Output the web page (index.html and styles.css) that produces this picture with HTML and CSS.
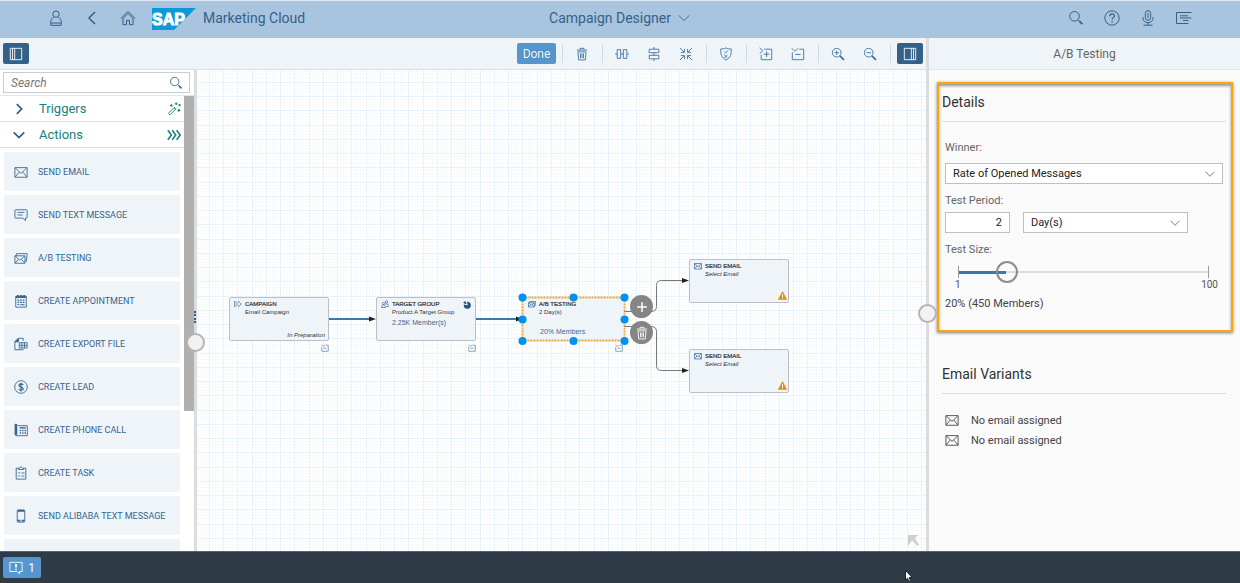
FILE: index.html
```html
<!DOCTYPE html>
<html lang="en">
<head>
    <meta charset="UTF-8">
    <meta name="viewport" content="width=device-width, initial-scale=1.0">
    <title>Campaign Designer</title>
    <link rel="stylesheet" href="styles.css">
</head>
<body>
    <!-- icon set -->
    <svg class="icon-defs" aria-hidden="true">
        <symbol id="i-user" viewBox="0 0 16 16"><circle cx="8" cy="4.2" r="3.2"/><path d="M5.5 7.5C3.5 8.3 2.7 10 2.7 12.5v2.8h10.6v-2.8c0-2.5-.8-4.2-2.8-5M2.7 13h10.6"/></symbol>
        <symbol id="i-back" viewBox="0 0 16 16"><path d="M11 2L5 8l6 6" stroke-width="1.5"/></symbol>
        <symbol id="i-home" viewBox="0 0 16 16"><path d="M.8 8.3L8 1.5l7.2 6.8M2.2 9L8 3.6 13.8 9M3 8.5v6.2h3.5v-4.4h3v4.4H13V8.5"/></symbol>
        <symbol id="i-search" viewBox="0 0 16 16"><circle cx="6.5" cy="6.3" r="4.8"/><path d="M10 10l2 1.8" /><path d="M11.3 11.2l3 3" stroke-width="1.8"/></symbol>
        <symbol id="i-help" viewBox="0 0 16 16"><circle cx="8" cy="8" r="7.2"/><path d="M5.8 6.2c0-3 4.6-3 4.6-.3 0 1.7-2.3 1.8-2.3 3.8M8.1 11v1.5" stroke-width="1.2"/></symbol>
        <symbol id="i-mic" viewBox="0 0 16 16"><rect x="5.3" y=".7" width="5.4" height="9.6" rx="2.7"/><path d="M3 7v1.5c0 5.5 10 5.5 10 0V7M8 12.7V15M3.5 15.2h9M8 3v5"/></symbol>
        <symbol id="i-menu" viewBox="0 0 16 16"><path d="M15.5 2.5h-15v11h12M4 5.8h8M4 8h11.5M7 10.5h5.5"/></symbol>
        <symbol id="i-down" viewBox="0 0 16 16"><path d="M2 5l6 6 6-6"/></symbol>
        <symbol id="i-right" viewBox="0 0 16 16"><path d="M5.5 2.5L11 8l-5.5 5.5"/></symbol>
        <symbol id="i-panel-left" viewBox="0 0 16 16"><path d="M1.5 1.5h13v13h-13zM4 1.5v13M6.5 1.5v13"/></symbol>
        <symbol id="i-panel-right" viewBox="0 0 16 16"><path d="M1.5 1.5h13v13h-13zM9.5 1.5v13M12 1.5v13"/></symbol>
        <symbol id="i-trash" viewBox="0 0 16 16"><path d="M2 3.5h12M5.8 3.2V1.5h4.4v1.7M3.2 5.5h9.6M3.4 5.5l.8 9.3h7.6l.8-9.3M6.3 7.3v5.5M8 7.3v5.5M9.7 7.3v5.5"/></symbol>
        <symbol id="i-align-h" viewBox="0 0 16 16"><path d="M2.5 3h4v10h-4zM9.5 3h4v10h-4zM0 8h2.5M6.5 8h3M13.5 8H16"/></symbol>
        <symbol id="i-align-v" viewBox="0 0 16 16"><path d="M2.5 2.5h11v4h-11zM2.5 9.5h11v4h-11zM8 0v2.5M8 6.5v3M8 13.5V16"/></symbol>
        <symbol id="i-collapse" viewBox="0 0 16 16"><path d="M1 1l4.8 4.8M6.2 2.2v4h-4M15 1l-4.8 4.8M9.8 2.2v4h4M1 15l4.8-4.8M6.2 13.8v-4h-4M15 15l-4.8-4.8M9.8 13.8v-4h4"/></symbol>
        <symbol id="i-shield" viewBox="0 0 16 16"><path d="M8 1c2 1.2 4 1.3 6 1.2.3 6-.8 10-6 12.8C2.8 12.2 1.7 8.2 2 2.2 4 2.3 6 2.2 8 1zM5.8 5.2l1.7 1.7 2.8-3M6 9l3.6 3.4M9.6 9L6 12.4"/></symbol>
        <symbol id="i-expand-box" viewBox="0 0 16 16"><path d="M6 2.5h8.5v12h-12V9M.8 1l3.5 3.3L.8 7.6M8.7 5v6.5M5.4 8.2H12"/></symbol>
        <symbol id="i-collapse-box" viewBox="0 0 16 16"><path d="M9.5 2.5h5v12h-13V6M1 1.5L4.5 5 8 1.5M5 8.5h6"/></symbol>
        <symbol id="i-zoom-in" viewBox="0 0 16 16"><circle cx="6.5" cy="6.5" r="5"/><path d="M6.5 4v5M4 6.5h5"/><path d="M10.2 10.2l4.6 4.4" stroke-width="2"/></symbol>
        <symbol id="i-zoom-out" viewBox="0 0 16 16"><circle cx="6.5" cy="6.5" r="5"/><path d="M4 6.5h5"/><path d="M10.2 10.2l4.6 4.4" stroke-width="2"/></symbol>
        <symbol id="i-wand" viewBox="0 0 16 16"><path d="M1.5 13l7-7 1.8 1.8-7 7zM8 6.8l1.5 1.5"/><path d="M3.5 4h3M5 2.5v3M9 2h3M10.5.5v3M13 3.5h2.6M14.3 2.2v2.6M12 9.5h3M13.5 8v3" stroke-width="1.4"/></symbol>
        <symbol id="i-triple" viewBox="0 0 16 16"><path d="M1 2.5L5 8l-4 5.5M6 2.5L10 8l-4 5.5M11 2.5L15 8l-4 5.5" stroke-width="1.8"/></symbol>
        <symbol id="i-mail" viewBox="0 0 16 16"><path d="M1 3h14v11H1zM1.5 3.5L8 9.5l6.5-6M1.5 13.5l4.3-5.3M14.5 13.5l-4.3-5.3"/></symbol>
        <symbol id="i-message" viewBox="0 0 16 16"><path d="M2 2h12q1 0 1 1v7.5q0 1-1 1h-1v3l-2.8-3H2q-1 0-1-1V3q0-1 1-1zM4 5h8M4 8h6"/></symbol>
        <symbol id="i-mails" viewBox="0 0 16 16"><path d="M1 5.5h11.5V14H1zM1.5 6l5.2 4.5L12 6M1.5 13.5l3.5-4M12 13.5L8.500 9.5M2.3 5.5L3 3h12l-.8 8.5h-1.7"/></symbol>
        <symbol id="i-calendar" viewBox="0 0 16 16"><path d="M2 2.5h12v12.5H2z"/><path d="M2 3.5h12M4.5 1v3M8 1v3M11.5 1v3" stroke-width="2"/><path d="M4 7h2M7 7h2M10 7h2M4 9.5h2M7 9.5h2M10 9.5h2M4 12h2M7 12.3h5" stroke-width="1.3"/></symbol>
        <symbol id="i-export" viewBox="0 0 16 16"><path d="M6 14.5H1v-9l4-4h5.5v3M6 6.5h9v6H6zM6 9.5h9M9 6.5v6M12 6.5v6M5 14.5h6"/><path d="M1 5.5l4-4v4z" fill="currentColor"/></symbol>
        <symbol id="i-dollar" viewBox="0 0 16 16"><circle cx="8" cy="8" r="7.2"/><path d="M10.5 5.7C10 4 5.7 4 5.7 6.200c0 2.3 4.9 1.3 4.9 3.7 0 2.2-4.6 2.2-5.2.2M8 3v10" stroke-width="1.4"/></symbol>
        <symbol id="i-phone" viewBox="0 0 16 16"><path d="M4.5 3h10.7v11.5H2v-2"/><path d="M2.2 1v12.5" stroke-width="3"/><path d="M6.5 5.5h7" stroke-width="1.6"/><path d="M6.5 8.5h1.6M9.3 8.5h1.6M12 8.5h1.6M6.5 11.5h1.6M9.3 11.5h1.6M12 11.5h1.6" stroke-width="1.6"/></symbol>
        <symbol id="i-task" viewBox="0 0 16 16"><path d="M5 2.5H2.5V15h11V2.5H11M5 4V2.5h1.5L8 .8l1.5 1.7H11V4zM4.5 7.5l1 1L7 7M8.5 8H12M4.5 11l1 1L7 10.5M8.5 11.5H12"/></symbol>
        <symbol id="i-mobile" viewBox="0 0 16 16"><rect x="3.7" y="1" width="8.6" height="14" rx="1"/><path d="M4 2h8M4 13.3h3.3M8.7 13.3H12" stroke-width="2"/></symbol>
        <symbol id="i-alert" viewBox="0 0 16 16"><path d="M1 1.5h14v10.5h-3v2.7L9 12H1z"/><path d="M8 3.5v4M8 8.8v1.5" stroke-width="2"/></symbol>
        <symbol id="i-campaign" viewBox="0 0 16 16"><path d="M1.5 2.5L7 8l-5.5 5.5zM8.5 5V2.5l6 5.5-6 5.5V11"/></symbol>
        <symbol id="i-group" viewBox="0 0 16 16"><circle cx="5" cy="7" r="2.3"/><circle cx="11" cy="4" r="2.5"/><path d="M1 15c0-7 8-7 8 0zM9 8.5c4-1.5 6 .5 6 4.5h-4"/></symbol>
        <symbol id="i-warning" viewBox="0 0 16 16"><path d="M8 1l7.5 14H.5z" fill="#e78c07" stroke="#e78c07"/><path d="M8 5.5v5M8 11.7v1.8" stroke="#fff" stroke-width="1.8"/></symbol>
        <symbol id="i-plus" viewBox="0 0 16 16"><path d="M8 1.5v13M1.5 8h13" stroke-width="2"/></symbol>
    </svg>

    <div class="app">
        <header class="shell">
            <div class="shell-left">
                <button class="shell-btn" aria-label="User"><svg class="icon icon-lg"><use href="#i-user"/></svg></button>
                <button class="shell-btn" aria-label="Back"><svg class="icon icon-lg"><use href="#i-back"/></svg></button>
                <button class="shell-btn" aria-label="Home"><svg class="icon icon-lg"><use href="#i-home"/></svg></button>
                <svg class="logo" viewBox="0 0 44 22" role="img" aria-label="SAP">
                    <path d="M0 0h44L22 22H0z" fill="#0a9ad9"/>
                    <text class="logo-text" x="0" y="17">SAP</text>
                </svg>
                <span class="product">Marketing Cloud</span>
            </div>
            <button class="app-title">Campaign Designer <svg class="icon"><use href="#i-down"/></svg></button>
            <div class="shell-right">
                <button class="shell-btn" aria-label="Search"><svg class="icon icon-lg"><use href="#i-search"/></svg></button>
                <button class="shell-btn" aria-label="Help"><svg class="icon icon-lg"><use href="#i-help"/></svg></button>
                <button class="shell-btn" aria-label="Voice"><svg class="icon icon-lg"><use href="#i-mic"/></svg></button>
                <button class="shell-btn" aria-label="Notifications"><svg class="icon icon-lg"><use href="#i-menu"/></svg></button>
            </div>
        </header>

        <div class="main">
            <div class="designer">
                <div class="toolbar">
                    <button class="toggle" aria-label="Toggle palette"><svg class="icon"><use href="#i-panel-left"/></svg></button>
                    <div class="tools">
                        <button class="done">Done</button>
                        <span class="sep"></span>
                        <button class="tool" aria-label="Delete"><svg class="icon"><use href="#i-trash"/></svg></button>
                        <span class="sep"></span>
                        <button class="tool" aria-label="Align horizontally"><svg class="icon"><use href="#i-align-h"/></svg></button>
                        <button class="tool" aria-label="Align vertically"><svg class="icon"><use href="#i-align-v"/></svg></button>
                        <button class="tool" aria-label="Fit"><svg class="icon"><use href="#i-collapse"/></svg></button>
                        <span class="sep"></span>
                        <button class="tool" aria-label="Validate"><svg class="icon"><use href="#i-shield"/></svg></button>
                        <span class="sep"></span>
                        <button class="tool" aria-label="Expand all"><svg class="icon"><use href="#i-expand-box"/></svg></button>
                        <button class="tool" aria-label="Collapse all"><svg class="icon"><use href="#i-collapse-box"/></svg></button>
                        <span class="sep"></span>
                        <button class="tool" aria-label="Zoom in"><svg class="icon"><use href="#i-zoom-in"/></svg></button>
                        <button class="tool" aria-label="Zoom out"><svg class="icon"><use href="#i-zoom-out"/></svg></button>
                        <span class="sep"></span>
                        <button class="toggle" aria-label="Toggle details"><svg class="icon"><use href="#i-panel-right"/></svg></button>
                    </div>
                </div>

                <div class="workspace">
                    <aside class="palette">
                        <div class="search">
                            <input type="text" placeholder="Search" aria-label="Search">
                            <svg class="icon"><use href="#i-search"/></svg>
                        </div>
                        <div class="palette-body">
                            <div class="palette-list">
                                <button class="group"><svg class="icon arrow"><use href="#i-right"/></svg><span>Triggers</span><svg class="icon"><use href="#i-wand"/></svg></button>
                                <button class="group"><svg class="icon arrow"><use href="#i-down"/></svg><span>Actions</span><svg class="icon"><use href="#i-triple"/></svg></button>
                                <div class="items">
                                    <button class="item"><svg class="icon"><use href="#i-mail"/></svg>SEND EMAIL</button>
                                    <button class="item"><svg class="icon"><use href="#i-message"/></svg>SEND TEXT MESSAGE</button>
                                    <button class="item"><svg class="icon"><use href="#i-mails"/></svg>A/B TESTING</button>
                                    <button class="item"><svg class="icon"><use href="#i-calendar"/></svg>CREATE APPOINTMENT</button>
                                    <button class="item"><svg class="icon"><use href="#i-export"/></svg>CREATE EXPORT FILE</button>
                                    <button class="item"><svg class="icon"><use href="#i-dollar"/></svg>CREATE LEAD</button>
                                    <button class="item"><svg class="icon"><use href="#i-phone"/></svg>CREATE PHONE CALL</button>
                                    <button class="item"><svg class="icon"><use href="#i-task"/></svg>CREATE TASK</button>
                                    <button class="item"><svg class="icon"><use href="#i-mobile"/></svg>SEND ALIBABA TEXT MESSAGE</button>
                                    <div class="item"></div>
                                </div>
                            </div>
                            <div class="scrollbar"></div>
                        </div>
                    </aside>

                    <div class="splitter"><span class="dots"></span><span class="handle handle-left"></span></div>

                    <div class="canvas">
                        <svg class="canvas-layer">
                            <defs>
                                <pattern id="grid" x="12" y="12" width="57" height="57" patternUnits="userSpaceOnUse">
                                    <path class="grid-minor" d="M3.5 0v57M6.5 0v57M9.5 0v57M17.5 0v57M20.5 0v57M23.5 0v57M31.5 0v57M34.5 0v57M37.5 0v57M46.5 0v57M49.5 0v57M52.5 0v57M0 3.5h57M0 6.5h57M0 9.5h57M0 17.5h57M0 20.5h57M0 23.5h57M0 31.5h57M0 34.5h57M0 37.5h57M0 46.5h57M0 49.5h57M0 52.5h57"/>
                                    <path class="grid-major" d="M.5 0v57M14.5 0v57M28.5 0v57M43.5 0v57M0 .5h57M0 14.5h57M0 28.5h57M0 43.5h57"/>
                                </pattern>
                            </defs>
                            <rect width="100%" height="100%" fill="url(#grid)"/>
                            <path class="flow" d="M132 249h44M279 249h42"/>
                            <path class="branch" d="M427 241.5h27q5.5 0 5.5-5v-21q0-5 5-5h22M427 256.500h27q5.5 0 5.5 5v34q0 5 5 5h22"/>
                            <path class="heads" d="M172 246.5l7 2.5-7 2.5zM319 246.5l7 2.5-7 2.5zM485 208l7 2.5-7 2.5zM485 298l7 2.5-7 2.5z"/>
                        </svg>

                        <div class="node" style="left: 32px; top: 227px">
                            <svg class="icon icon-sm"><use href="#i-campaign"/></svg>
                            <div class="node-text"><b>CAMPAIGN</b><span>Email Campaign</span></div>
                            <em class="status">In Preparation</em>
                        </div>
                        <div class="node" style="left: 179px; top: 227px">
                            <svg class="icon icon-sm"><use href="#i-group"/></svg>
                            <div class="node-text"><b>TARGET GROUP</b><span>Product A Target Group</span><a href="#">2.25K Member(s)</a></div>
                            <svg class="globe" viewBox="0 0 8 8"><circle cx="4.3" cy="4.2" r="3.5"/><path class="globe-gap" d="M0 2.8l4.3 1L3 0"/><path d="M0 1.5l3 1.2L2.2 0z"/></svg>
                        </div>
                        <div class="node selected" style="left: 326px; top: 227px">
                            <svg class="icon icon-sm"><use href="#i-mails"/></svg>
                            <div class="node-text"><b>A/B TESTING</b><span>2 Day(s)</span></div>
                            <a class="members" href="#">20% Members</a>
                        </div>
                        <div class="node" style="left: 492px; top: 189px">
                            <svg class="icon icon-sm"><use href="#i-mail"/></svg>
                            <div class="node-text"><b>SEND EMAIL</b><em>Select Email</em></div>
                            <svg class="icon warn"><use href="#i-warning"/></svg>
                        </div>
                        <div class="node" style="left: 492px; top: 279px">
                            <svg class="icon icon-sm"><use href="#i-mail"/></svg>
                            <div class="node-text"><b>SEND EMAIL</b><em>Select Email</em></div>
                            <svg class="icon warn"><use href="#i-warning"/></svg>
                        </div>

                        <svg class="canvas-layer">
                            <rect class="selection" x="325.5" y="227.5" width="102" height="43"/>
                            <g class="grips">
                                <circle cx="325.5" cy="227.5" r="4"/><circle cx="376.5" cy="227.5" r="4"/><circle cx="427.5" cy="227.5" r="4"/>
                                <circle cx="325.5" cy="249.5" r="4"/><circle cx="427.5" cy="249.5" r="4"/>
                                <circle cx="325.5" cy="271" r="4"/><circle cx="376.5" cy="271" r="4"/><circle cx="427.5" cy="271" r="4"/>
                            </g>
                            <g class="notes">
                                <use href="#i-collapse-box" x="124" y="274" width="8" height="8"/>
                                <use href="#i-collapse-box" x="271" y="274" width="8" height="8"/>
                                <use href="#i-collapse-box" x="418" y="274" width="8" height="8"/>
                            </g>
                        </svg>

                        <button class="round" style="left: 433px; top: 225px" aria-label="Add"><svg class="icon icon-md"><use href="#i-plus"/></svg></button>
                        <button class="round" style="left: 433px; top: 251px" aria-label="Remove"><svg class="icon"><use href="#i-trash"/></svg></button>
                        <svg class="corner" viewBox="0 0 11 11"><path d="M0 0h11L6.5 3 11 9.5 9.5 11 4 5.5 0 11z"/></svg>
                    </div>
                </div>
            </div>

            <div class="splitter"><span class="handle handle-right"></span></div>

            <aside class="details">
                <h2 class="details-title">A/B Testing</h2>
                <section class="highlight">
                    <h3>Details</h3>
                    <div class="form">
                        <label for="winner">Winner:</label>
                        <div class="select">
                            <select id="winner"><option>Rate of Opened Messages</option></select>
                            <svg class="icon"><use href="#i-down"/></svg>
                        </div>
                        <label for="period">Test Period:</label>
                        <div class="period">
                            <input id="period" type="text" value="2">
                            <div class="select">
                                <select aria-label="Period unit"><option>Day(s)</option></select>
                                <svg class="icon"><use href="#i-down"/></svg>
                            </div>
                        </div>
                        <label for="size">Test Size:</label>
                        <div class="slider"><input id="size" type="range" min="1" max="100" value="20"></div>
                        <div class="scale"><span>1</span><span>100</span></div>
                        <p class="result">20% (450 Members)</p>
                    </div>
                </section>
                <section class="variants">
                    <h3>Email Variants</h3>
                    <ul>
                        <li><svg class="icon"><use href="#i-mail"/></svg>No email assigned</li>
                        <li><svg class="icon"><use href="#i-mail"/></svg>No email assigned</li>
                    </ul>
                </section>
            </aside>
        </div>

        <footer class="footer">
            <button class="messages"><svg class="icon"><use href="#i-alert"/></svg>1</button>
            <svg class="cursor" viewBox="0 0 8 12"><path d="M.5.5V10l2-1.800L4 11.5l1.5-.7-1.300-3.300h3z"/></svg>
        </footer>
    </div>
</body>
</html>
```

FILE: styles.css
```css
* {
    margin: 0;
    padding: 0;
    box-sizing: border-box;
}

body {
    font-family: Roboto, "Liberation Sans", sans-serif;
    font-size: 11px;
    color: #333;
}

button, input, select {
    font: inherit;
    color: inherit;
    border: none;
    background: none;
}

button {
    cursor: pointer;
}

a {
    color: #3a6a96;
    text-decoration: none;
}

.icon-defs {
    position: absolute;
    width: 0;
    height: 0;
}

.icon {
    width: 14px;
    height: 14px;
    flex: none;
    fill: none;
    stroke: currentColor;
}

.icon-lg { width: 16px; height: 16px; }
.icon-md { width: 12px; height: 12px; }
.icon-sm { width: 8px; height: 8px; }

.app {
    display: flex;
    flex-direction: column;
    height: 100vh;
    overflow: hidden;
}

/* shell header */
.shell {
    display: grid;
    grid-template-columns: 1fr auto 1fr;
    align-items: center;
    height: 38px;
    padding: 0 38px 4px;
    background: #a9c4df;
    border-top: 1px solid #dfe9f3;
    color: #34618a;
    flex: none;
}

.shell-left, .shell-right {
    display: flex;
    align-items: center;
}

.shell-right {
    justify-content: flex-end;
}

.shell-btn {
    display: flex;
    justify-content: center;
    width: 36px;
}

.logo {
    width: 44px;
    height: 22px;
    margin: 2px 7px 0 6px;
}

.logo-text {
    font: bold 16px "Liberation Sans", sans-serif;
    fill: #fff;
    stroke: #fff;
}

.product, .app-title {
    font-size: 14px;
    line-height: 20px;
}

.app-title {
    display: flex;
    align-items: center;
    gap: 6px;
}

/* columns */
.main {
    display: flex;
    flex: 1;
    min-height: 0;
}

.designer {
    display: flex;
    flex-direction: column;
    flex: 1;
    min-width: 0;
}

.toolbar {
    display: flex;
    align-items: center;
    justify-content: space-between;
    height: 32px;
    padding: 0 3px;
    background: #eff4f9;
    border-bottom: 1px solid #dcdfe2;
    color: #3b6f9e;
    flex: none;
}

.tools {
    display: flex;
    align-items: center;
}

.toggle {
    display: flex;
    align-items: center;
    justify-content: center;
    width: 26px;
    height: 21px;
    border-radius: 2px;
    background: #346187;
    color: #fff;
}

.tools .toggle {
    margin-left: 3px;
}

.done {
    width: 39px;
    height: 21px;
    margin-right: 2px;
    border-radius: 2px;
    background: #5496cd;
    font-size: 12px;
    color: #fff;
    text-shadow: 0 0 1px #2b5c88;
}

.tool {
    display: flex;
    justify-content: center;
    width: 32px;
}

.sep {
    width: 1px;
    height: 19px;
    margin: 0 3px 0 4px;
    background: #d3d8dd;
}

.workspace {
    display: flex;
    flex: 1;
    min-height: 0;
}

/* palette */
.palette {
    display: flex;
    flex-direction: column;
    width: 194px;
    background: #fff;
    flex: none;
}

.search {
    display: flex;
    align-items: center;
    height: 21px;
    margin: 2px 4px 2px 3px;
    padding: 0 6px 0 7px;
    border: 1px solid #c8cdd2;
    color: #346187;
    flex: none;
}

.search input {
    flex: 1;
    min-width: 0;
    font-size: 12px;
    font-style: italic;
    outline: none;
}

.search input::placeholder {
    color: #777;
}

.palette-body {
    display: flex;
    flex: 1;
    min-height: 0;
    border-top: 1px solid #e3e6e9;
}

.palette-list {
    flex: 1;
    overflow: hidden;
}

.scrollbar {
    width: 10px;
    height: 315px;
    max-height: 100%;
    background: #b0b0b0;
}

.group {
    display: flex;
    align-items: center;
    width: 100%;
    height: 26px;
    padding: 0 3px 0 12px;
    border-bottom: 1px solid #dedede;
    font-size: 13px;
    color: #16827a;
    text-align: left;
}

.group span {
    flex: 1;
    margin-left: 13px;
}

.group .arrow {
    color: #2d5f8d;
    stroke-width: 2;
}

.items {
    display: flex;
    flex-direction: column;
    gap: 4px;
    padding: 4px 4px 0;
}

.item {
    display: flex;
    align-items: center;
    gap: 10px;
    height: 39px;
    padding: 0 10px;
    border-radius: 2px;
    background: #eff4f9;
    font-size: 9px;
    color: #35658f;
    text-align: left;
    flex: none;
}

/* splitters */
.splitter {
    position: relative;
    z-index: 2;
    width: 3px;
    background: #dcdcdc;
    flex: none;
}

.handle {
    position: absolute;
    left: -8px;
    width: 19px;
    height: 19px;
    border: 2px solid #b5b5b5;
    border-radius: 50%;
    background: #f2f2f2;
}

.handle-left { top: 263px; }
.handle-right { top: 266px; }

.dots {
    position: absolute;
    top: 241px;
    left: 0;
    height: 12px;
    border-left: 2px dotted #2d5f8d;
}

/* canvas */
.canvas {
    position: relative;
    flex: 1;
    overflow: hidden;
    background: #fff;
    font-family: "Liberation Sans", Arial, sans-serif;
}

.canvas-layer {
    position: absolute;
    inset: 0;
    width: 100%;
    height: 100%;
    pointer-events: none;
}

.grid-minor { stroke: #f8fbfe; }
.grid-major { stroke: #e8f2fa; }

.flow {
    stroke: #3778b0;
    stroke-width: 2;
}

.branch {
    fill: none;
    stroke: #777;
}

.heads { fill: #222; }

.node {
    position: absolute;
    display: flex;
    gap: 3px;
    width: 100px;
    height: 44px;
    padding: 2px 4px;
    border: 1px solid #bcc0c4;
    border-radius: 2px;
    background: #eff4f9;
    color: #333;
    font-size: 6px;
    line-height: 8px;
}

.node .icon-sm {
    color: #3b6f9e;
    stroke-width: 1.5;
}

.node-text {
    display: flex;
    flex-direction: column;
    white-space: nowrap;
}

.node-text b {
    font-weight: normal;
    -webkit-text-stroke: 0.2px #333;
}

.node a {
    font-size: 7px;
}

.node-text a {
    margin-top: 3px;
}

.status {
    position: absolute;
    right: 3px;
    bottom: 1px;
}

.members {
    position: absolute;
    left: 16px;
    bottom: 4px;
}

.globe {
    position: absolute;
    top: 3px;
    right: 4px;
    width: 8px;
    height: 8px;
    fill: #24527e;
}

.globe-gap {
    fill: none;
    stroke: #eff4f9;
}

.node .warn {
    position: absolute;
    right: 1px;
    bottom: 2px;
    width: 9px;
    height: 9px;
}

.selected {
    border-color: #eff4f9;
}

.selection {
    fill: none;
    stroke: #eda63a;
    stroke-width: 2;
    stroke-dasharray: 2 1;
}

.grips { fill: #0092ee; }

.notes {
    fill: none;
    stroke: #4f7fa9;
    stroke-width: 1.4;
}

.round {
    position: absolute;
    display: flex;
    align-items: center;
    justify-content: center;
    width: 23px;
    height: 23px;
    border-radius: 50%;
    background: #858585;
    color: #fff;
}

.corner {
    position: absolute;
    right: 7px;
    bottom: 5px;
    width: 11px;
    height: 11px;
    fill: #cfcfcf;
}

/* details panel */
.details {
    width: 311px;
    background: #fafafa;
    flex: none;
}

.details-title {
    height: 32px;
    background: #eff4f9;
    border-bottom: 1px solid #dbe7f2;
    font-size: 12px;
    font-weight: normal;
    line-height: 32px;
    text-align: center;
    color: #666;
}

.highlight {
    margin: 12px 7px 0 8px;
    padding: 8px 5px 17px 3px;
    border: 2px solid #fba70b;
    box-shadow: 0 1px 3px rgba(0, 0, 0, 0.5), inset 0 2px 3px rgba(0, 0, 0, 0.4);
}

.details h3 {
    padding-bottom: 9px;
    border-bottom: 1px solid #dedede;
    font-size: 14px;
    font-weight: normal;
    line-height: 20px;
}

.form {
    padding: 17px 3px 0;
}

.form label {
    display: block;
    line-height: 18px;
    color: #666;
}

.select {
    display: grid;
    align-items: center;
    margin-top: 6px;
}

.select select, .select .icon {
    grid-area: 1 / 1;
}

.select select {
    appearance: none;
    width: 100%;
    height: 21px;
    padding: 0 7px;
    border: 1px solid #bfbfbf;
    background: #fff;
    color: #222;
}

.select .icon {
    width: 12px;
    justify-self: end;
    margin-right: 7px;
    color: #346187;
    pointer-events: none;
}

.form > .select {
    margin-bottom: 8px;
}

.period {
    display: flex;
    gap: 13px;
    margin: 2px 0 8px;
}

.period input {
    width: 65px;
    height: 21px;
    padding: 0 7px;
    border: 1px solid #bfbfbf;
    background: #fff;
    color: #222;
    text-align: right;
}

.period .select {
    width: 165px;
    margin: 0;
}

.slider {
    height: 12px;
    margin: 7px 14px 0 13px;
    border: solid #999;
    border-width: 0 1px;
    background:
        linear-gradient(#3778b0, #3778b0) left center / 19% 3px no-repeat,
        linear-gradient(#dcdcdc, #dcdcdc) left center / 100% 2px no-repeat;
}

.slider input {
    display: block;
    appearance: none;
    width: calc(100% + 22px);
    height: 12px;
    margin: 0 -11px;
}

.slider input::-webkit-slider-thumb {
    appearance: none;
    width: 22px;
    height: 22px;
    border: 2px solid #8c8c8c;
    border-radius: 50%;
    background: transparent;
}

.scale {
    display: flex;
    justify-content: space-between;
    margin: 1px 5px 0 10px;
    font-size: 10px;
    line-height: 12px;
    color: #555;
}

.result {
    margin-top: 4px;
    line-height: 18px;
    color: #444;
}

.variants {
    padding: 32px 14px 0 13px;
}

.variants ul {
    padding: 16px 3px 0;
    list-style: none;
}

.variants li {
    display: flex;
    align-items: center;
    gap: 12px;
    height: 20px;
    color: #444;
}

/* footer */
.footer {
    position: relative;
    display: flex;
    align-items: center;
    height: 32px;
    padding: 0 3px;
    background: #2f3c48;
    border-top: 1px solid #536470;
    flex: none;
}

.messages {
    display: flex;
    align-items: center;
    justify-content: center;
    gap: 5px;
    width: 38px;
    height: 21px;
    border-radius: 2px;
    background: #5496cd;
    font-size: 12px;
    color: #fff;
}

.cursor {
    position: absolute;
    left: 73%;
    top: 18px;
    width: 8px;
    height: 12px;
    fill: #fff;
    stroke: #1c2230;
}
```
